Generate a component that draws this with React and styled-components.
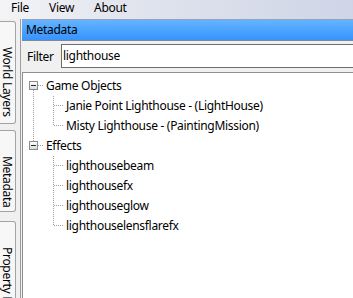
import React from 'react';
import styled, { createGlobalStyle } from 'styled-components';

const Global = createGlobalStyle`
  html, body { margin: 0; padding: 0; }
  body {
    width: 353px; height: 298px; overflow: hidden; background: #f0f0f0;
    font-family: "Noto Sans", "Open Sans", sans-serif; font-size: 12px; color: #000;
    letter-spacing: -0.3px;
  }
`;

const Window = styled.div`
  width: 353px; height: 298px; display: flex; flex-direction: column;
  overflow: hidden; background: #f0f0f0;
`;

const MenuBar = styled.div`
  height: 19px; flex: none; display: flex; padding-left: 1px;
  background: linear-gradient(to right, #f4f4f6 0%, #e2e5ee 35%, #cfd5e7 100%);
`;

const MenuItem = styled.div`
  padding: 0 10px; line-height: 16px;
`;

const Body = styled.div`
  flex: 1; min-height: 0; display: flex;
`;

const SideTabs = styled.div`
  width: 17px; flex: none; display: flex; flex-direction: column;
  padding-top: 2px; box-sizing: border-box; overflow: hidden;
`;

const Tab = styled.div`
  width: 16px; height: ${p => p.$h}px; flex: none; box-sizing: border-box;
  margin-top: ${p => p.$mt}px;
  border: 1px solid #a3a3a3; border-left: none; border-radius: 0 3px 3px 0;
  background: #f7f7f7;
  writing-mode: vertical-rl; line-height: 15px;
  padding-top: 25px; white-space: nowrap; overflow: hidden;
`;

const Splitter = styled.div`
  width: 3px; flex: none;
`;

const Panel = styled.div`
  flex: 1; min-width: 0; display: flex; flex-direction: column;
  border-left: 1px solid #9d9d9d; padding-left: 1px;
`;

const Header = styled.div`
  height: 20px; flex: none; line-height: 20px; padding-left: 4px;
  border-top: 1px solid #93a3ba; border-bottom: 1px solid #7d8796;
  background: linear-gradient(to bottom, #66b3ff 0%, #4ba4ff 50%, #3993ff 100%);
`;

const FilterRow = styled.div`
  flex: none; display: flex; align-items: center;
  padding: 3px 0 4px 5px; margin-right: -10px;
`;

const FilterLabel = styled.div`
  width: 34px; flex: none;
`;

const FilterInput = styled.div`
  flex: 1; height: 22px; line-height: 22px; background: #fff;
  border: 1px solid #6e6e6e; padding-left: 1px;
`;

const Tree = styled.div`
  flex: 1; background: #fff; margin-right: -10px;
  border-top: 1px solid #8f8f8f; border-left: 1px solid #8f8f8f;
  padding: 3px 0 0 1px;
`;

const Row = styled.div`
  height: 20px; display: flex; align-items: center; white-space: nowrap;
`;

const Label = styled.span`
  margin-left: 2px; line-height: 20px;
`;

const DOT = { stroke: '#a0a0a0', strokeWidth: 1, strokeDasharray: '1 1', shapeRendering: 'crispEdges', fill: 'none' };

function Guide({ line }) {
  return (
    <svg width="20" height="20" viewBox="0 0 20 20" style={{ flex: 'none' }}>
      {line && <path d="M9.5 0 V20" {...DOT} />}
    </svg>
  );
}

function Connector({ up, down, expander }) {
  return (
    <svg width="20" height="20" viewBox="0 0 20 20" style={{ flex: 'none' }}>
      <defs>
        <linearGradient id="bx" x1="0" y1="0" x2="0" y2="1">
          <stop offset="0" stopColor="#ffffff" />
          <stop offset="1" stopColor="#d8d8d8" />
        </linearGradient>
      </defs>
      {up && <path d="M9.5 0 V9" {...DOT} />}
      {down && <path d="M9.5 10 V20" {...DOT} />}
      <path d={expander ? 'M14 9.5 H20' : 'M10 9.5 H20'} {...DOT} />
      {expander && (
        <g shapeRendering="crispEdges">
          <rect x="5.5" y="5.5" width="8" height="8" fill="url(#bx)" stroke="#8c8c8c" />
          <path d="M7 9.5 H12" stroke="#2a2a2a" />
        </g>
      )}
    </svg>
  );
}

const tree = [
  { label: 'Game Objects', children: ['Janie Point Lighthouse - (LightHouse)', 'Misty Lighthouse - (PaintingMission)'] },
  { label: 'Effects', children: ['lighthousebeam', 'lighthousefx', 'lighthouseglow', 'lighthouselensflarefx'] },
];

export default function App() {
  return (
    <Window>
      <Global />
      <MenuBar>
        <MenuItem>File</MenuItem>
        <MenuItem>View</MenuItem>
        <MenuItem>About</MenuItem>
      </MenuBar>
      <Body>
        <SideTabs>
          <Tab $h={103} $mt={0}>World Layers</Tab>
          <Tab $h={82} $mt={6}>Metadata</Tab>
          <Tab $h={90} $mt={9}>Property Editor</Tab>
        </SideTabs>
        <Splitter />
        <Panel>
          <Header>Metadata</Header>
          <FilterRow>
            <FilterLabel>Filter</FilterLabel>
            <FilterInput>lighthouse</FilterInput>
          </FilterRow>
          <Tree>
            {tree.map((node, i) => {
              const lastRoot = i === tree.length - 1;
              return (
                <React.Fragment key={node.label}>
                  <Row>
                    <Connector up={i > 0} down={!lastRoot} expander />
                    <Label>{node.label}</Label>
                  </Row>
                  {node.children.map((c, j) => (
                    <Row key={c}>
                      <Guide line={!lastRoot} />
                      <Connector up down={j < node.children.length - 1} />
                      <Label>{c}</Label>
                    </Row>
                  ))}
                </React.Fragment>
              );
            })}
          </Tree>
        </Panel>
      </Body>
    </Window>
  );
}
